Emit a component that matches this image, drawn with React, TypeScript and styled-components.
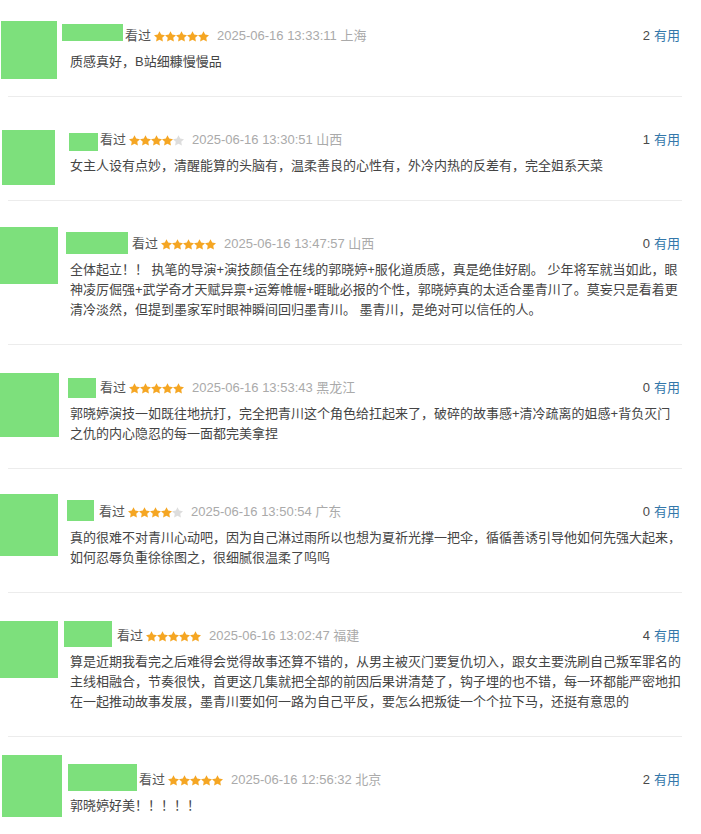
import React from "react";
import styled, { createGlobalStyle } from "styled-components";

const GlobalStyle = createGlobalStyle`
  html, body {
    margin: 0;
    padding: 0;
    background: #ffffff;
  }
  body {
    font-family: "Liberation Sans", Arial, "Noto Sans CJK SC", sans-serif;
    font-size: 13px;
    color: #444444;
  }
`;

const Page = styled.div`
  padding: 0 19px 0 8px;
  width: 674px;
`;

const Item = styled.div`
  display: flex;
  padding: 33px 0 24px;
  border-bottom: 1px solid #ececec;

  &:first-child {
    padding-top: 26px;
  }
  &:last-child {
    border-bottom: none;
  }
`;

const AvatarCol = styled.div`
  width: 62px;
  flex: none;
  height: 0;
`;

const Avatar = styled.div<{ $x: number; $y: number; $w: number; $h: number }>`
  width: ${(p) => p.$w}px;
  height: ${(p) => p.$h}px;
  margin-left: ${(p) => p.$x}px;
  margin-top: ${(p) => p.$y}px;
  background: #7de07c;
`;

const Content = styled.div`
  flex: 1;
  min-width: 0;
`;

const MetaRow = styled.div`
  display: flex;
  align-items: center;
  justify-content: space-between;
  height: 20px;
  line-height: 20px;
`;

const Info = styled.div`
  display: flex;
  align-items: center;
  height: 20px;
  white-space: nowrap;
`;

const NameBlock = styled.span<{ $x: number; $y: number; $w: number; $h: number; $gap: number }>`
  display: block;
  flex: none;
  align-self: flex-start;
  width: ${(p) => p.$w}px;
  height: ${(p) => p.$h}px;
  margin-left: ${(p) => p.$x}px;
  margin-top: ${(p) => p.$y}px;
  margin-right: ${(p) => p.$gap}px;
  background: #7de07c;
`;

const Watched = styled.span`
  color: #555555;
`;

const Stars = styled.span`
  display: inline-flex;
  align-items: center;
  margin: 0 8px 0 3px;
`;

const DateText = styled.span`
  color: #aaaaaa;
`;

const Votes = styled.div`
  display: flex;
  align-items: center;
  gap: 4px;
  padding-right: 2px;
  white-space: nowrap;
`;

const VoteCount = styled.span`
  color: #494949;
`;

const VoteLink = styled.span`
  color: #3377aa;
`;

const CommentText = styled.p`
  margin: 6px 0 0;
  line-height: 20px;
  color: #444444;
  word-break: break-all;
`;

const Star: React.FC<{ on: boolean }> = ({ on }) => (
  <svg width="11" height="11" viewBox="1.5 1.5 21 20.5">
    <path
      d="M12 1.5l3.2 6.6 7.3 1.05-5.25 5.1 1.25 7.25L12 18.1l-6.5 3.4 1.25-7.25L1.5 9.15l7.3-1.05z"
      fill={on ? "#f5a623" : "#dddddd"}
    />
  </svg>
);

type Review = {
  avatar: { x: number; y: number; w: number; h: number };
  name: { x: number; y: number; w: number; h: number; gap: number };
  rating: number;
  date: string;
  votes: number;
  text: string;
};

const reviews: Review[] = [
  {
    avatar: { x: -7, y: -5, w: 56, h: 58 },
    name: { x: -8, y: -2, w: 61, h: 17, gap: 2 },
    rating: 5,
    date: "2025-06-16 13:33:11 上海",
    votes: 2,
    text: "质感真好，B站细糠慢慢品",
  },
  {
    avatar: { x: -6, y: 0, w: 53, h: 55 },
    name: { x: -1, y: 3, w: 29, h: 18, gap: 2 },
    rating: 4,
    date: "2025-06-16 13:30:51 山西",
    votes: 1,
    text: "女主人设有点妙，清醒能算的头脑有，温柔善良的心性有，外冷内热的反差有，完全姐系天菜",
  },
  {
    avatar: { x: -8, y: -7, w: 58, h: 57 },
    name: { x: -4, y: -2, w: 62, h: 22, gap: 4 },
    rating: 5,
    date: "2025-06-16 13:47:57 山西",
    votes: 0,
    text: "全体起立！！ 执笔的导演+演技颜值全在线的郭晓婷+服化道质感，真是绝佳好剧。 少年将军就当如此，眼神凌厉倔强+武学奇才天赋异禀+运筹帷幄+睚眦必报的个性，郭晓婷真的太适合墨青川了。莫妄只是看着更清冷淡然，但提到墨家军时眼神瞬间回归墨青川。 墨青川，是绝对可以信任的人。",
  },
  {
    avatar: { x: -8, y: -5, w: 59, h: 64 },
    name: { x: -2, y: 0, w: 28, h: 20, gap: 4 },
    rating: 5,
    date: "2025-06-16 13:53:43 黑龙江",
    votes: 0,
    text: "郭晓婷演技一如既往地抗打，完全把青川这个角色给扛起来了，破碎的故事感+清冷疏离的姐感+背负灭门之仇的内心隐忍的每一面都完美拿捏",
  },
  {
    avatar: { x: -8, y: -8, w: 58, h: 62 },
    name: { x: -3, y: -2, w: 27, h: 21, gap: 5 },
    rating: 4,
    date: "2025-06-16 13:50:54 广东",
    votes: 0,
    text: "真的很难不对青川心动吧，因为自己淋过雨所以也想为夏祈光撑一把伞，循循善诱引导他如何先强大起来，如何忍辱负重徐徐图之，很细腻很温柔了呜呜",
  },
  {
    avatar: { x: -8, y: -5, w: 58, h: 57 },
    name: { x: -6, y: -5, w: 48, h: 26, gap: 5 },
    rating: 5,
    date: "2025-06-16 13:02:47 福建",
    votes: 4,
    text: "算是近期我看完之后难得会觉得故事还算不错的，从男主被灭门要复仇切入，跟女主要洗刷自己叛军罪名的主线相融合，节奏很快，首更这几集就把全部的前因后果讲清楚了，钩子埋的也不错，每一环都能严密地扣在一起推动故事发展，墨青川要如何一路为自己平反，要怎么把叛徒一个个拉下马，还挺有意思的",
  },
  {
    avatar: { x: -6, y: -15, w: 60, h: 62 },
    name: { x: -2, y: -6, w: 69, h: 27, gap: 2 },
    rating: 5,
    date: "2025-06-16 12:56:32 北京",
    votes: 2,
    text: "郭晓婷好美！！！！！",
  },
];

export default function App() {
  return (
    <>
      <GlobalStyle />
      <Page>
        {reviews.map((r, i) => (
          <Item key={i}>
            <AvatarCol>
              <Avatar $x={r.avatar.x} $y={r.avatar.y} $w={r.avatar.w} $h={r.avatar.h} />
            </AvatarCol>
            <Content>
              <MetaRow>
                <Info>
                  <NameBlock
                    $x={r.name.x}
                    $y={r.name.y}
                    $w={r.name.w}
                    $h={r.name.h}
                    $gap={r.name.gap}
                  />
                  <Watched>看过</Watched>
                  <Stars>
                    {[0, 1, 2, 3, 4].map((s) => (
                      <Star key={s} on={s < r.rating} />
                    ))}
                  </Stars>
                  <DateText>{r.date}</DateText>
                </Info>
                <Votes>
                  <VoteCount>{r.votes}</VoteCount>
                  <VoteLink>有用</VoteLink>
                </Votes>
              </MetaRow>
              <CommentText>{r.text}</CommentText>
            </Content>
          </Item>
        ))}
      </Page>
    </>
  );
}
